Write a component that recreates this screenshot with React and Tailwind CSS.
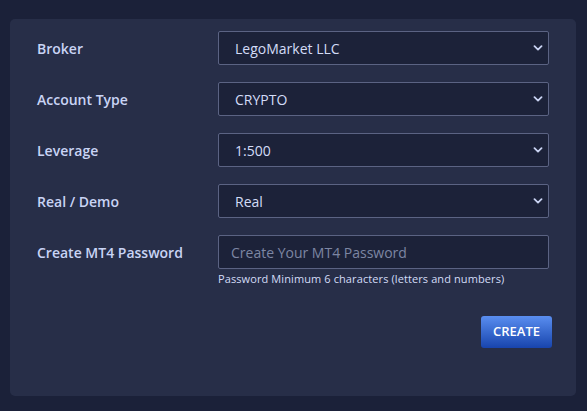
import React from "react";

function Chevron() {
  return (
    <svg width="10" height="6" viewBox="0 0 10 6" className="absolute right-[5px] top-1/2 -translate-y-1/2" fill="none">
      <path d="M1.5 1.2 L5 4.6 L8.5 1.2" stroke="#c9d3f2" strokeWidth="1.8" strokeLinecap="round" strokeLinejoin="round" />
    </svg>
  );
}

function SelectBox({ value }) {
  return (
    <div className="relative h-[34px] w-[331px] border border-[#5b6383] bg-[#1c2239] rounded-[2px] flex items-center pl-[16px] text-[14px] text-[#d3dcf7]">
      {value}
      <Chevron />
    </div>
  );
}

function Row({ label, children }) {
  return (
    <div className="grid grid-cols-[181px_331px] items-center">
      <div className="text-[14px] font-semibold text-[#c9d4f5]">{label}</div>
      {children}
    </div>
  );
}

export default function App() {
  return (
    <div className="h-[411px] w-[587px] bg-[#1b2139] pt-[19px] pl-[10px]" style={{ fontFamily: '"Open Sans", sans-serif' }}>
      <div className="w-[566px] h-[377px] rounded-[5px] bg-[#272e48] pl-[27px] pr-[24px] pt-[12px] flex flex-col">
        <div className="flex flex-col gap-[17px]">
          <Row label="Broker"><SelectBox value="LegoMarket LLC" /></Row>
          <Row label="Account Type"><SelectBox value="CRYPTO" /></Row>
          <Row label="Leverage"><SelectBox value="1:500" /></Row>
          <Row label="Real / Demo"><SelectBox value="Real" /></Row>
          <Row label="Create MT4 Password">
            <div className="h-[34px] w-[331px] border border-[#5b6383] bg-[#1c2239] rounded-[2px] flex items-center pl-[12px] text-[14px] text-[#7d86a3]">
              Create Your MT4 Password
            </div>
          </Row>
        </div>
        <div className="grid grid-cols-[181px_331px] mt-[2px]">
          <div />
          <div className="text-[11px] tracking-[0.1px] text-[#d3dcf7] whitespace-nowrap">Password Minimum 6 characters (letters and numbers)</div>
        </div>
        <div className="flex justify-end mt-[28px]">
          <button className="w-[71px] h-[32px] rounded-[3px] bg-gradient-to-b from-[#5a8ef0] to-[#1844ad] text-white text-[13px] font-semibold">
            CREATE
          </button>
        </div>
      </div>
    </div>
  );
}
